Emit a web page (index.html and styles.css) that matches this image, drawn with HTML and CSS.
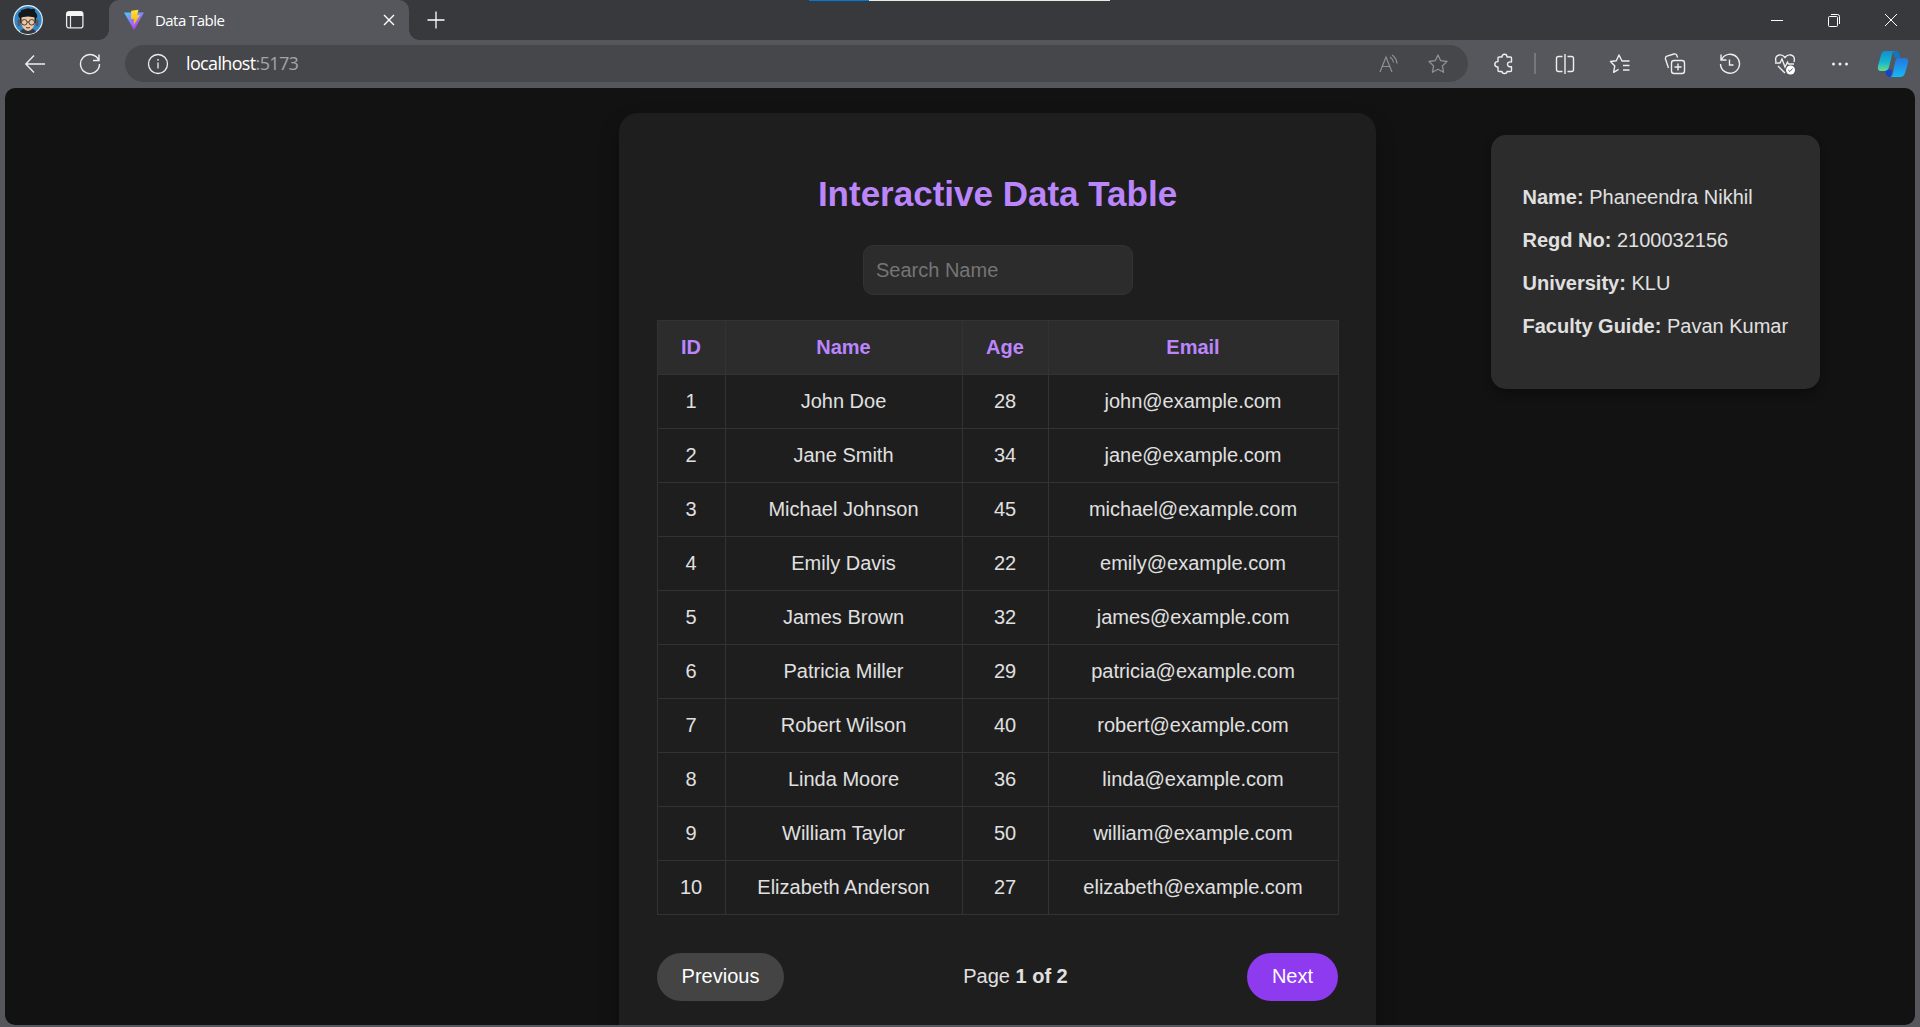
FILE: index.html
```html
<!DOCTYPE html>
<html lang="en">
<head>
<meta charset="utf-8">
<title>Data Table</title>
<link rel="stylesheet" href="styles.css">
</head>
<body>
<header class="tabstrip">
  <svg class="avatar" width="30" height="30" viewBox="0 0 30 30"><circle cx="15" cy="15" r="14.300" fill="#2f86c8" stroke="#e8eef2" stroke-width="1.200"/><path d="M7 27Q9 23 15 23Q21 23 23 27Q15 31 7 27Z" fill="#343941"/><path d="M7 10Q7 3 15 4Q23 3 23 10V18H7Z" fill="#15181b"/><path d="M8.500 11Q15 9 21.500 11V19Q20 25 15 26Q10 25 8.500 19Z" fill="#ebc6a4"/><path d="M6 13Q4 7 8 7Q7 4 11 5Q14 2 18 4Q23 3 22 7Q25 9 24 13Q15 10 6 13Z" fill="#15181b"/><rect x="4.500" y="14" width="3" height="7" rx="1.500" fill="#545963"/><rect x="22.500" y="14" width="3" height="7" rx="1.500" fill="#545963"/><g fill="none" stroke="#4a3d33"><circle cx="11.300" cy="17.300" r="2.800"/><circle cx="18.700" cy="17.300" r="2.800"/><path d="M14 17h2M13 22.500q2 1 4 0"/></g></svg>
  <svg class="workspaces" width="20" height="20" viewBox="0 0 20 20"><rect x="1.600" y="1.600" width="16.300" height="16.300" rx="2.500" fill="none" stroke="#e8e8e8" stroke-width="1.300"/><path d="M1.500 6V4q0-2.500 2.500-2.500h11.500Q18 1.500 18 4v2Z" fill="#f5f5f5"/><path d="M5.500 6v12" stroke="#e8e8e8" stroke-width="1.200"/></svg>
  <div class="tab">
    <svg width="22" height="22" viewBox="0 0 22 22"><defs><linearGradient id="vite" x1="0" y1="0" x2=".6" y2="1"><stop stop-color="#41d1ff"/><stop offset=".45" stop-color="#8585ff"/><stop offset="1" stop-color="#bd34fe"/></linearGradient><linearGradient id="bolt" x1="0" y1="0" x2="0" y2="1"><stop stop-color="#ffe33d"/><stop offset="1" stop-color="#ffa800"/></linearGradient></defs><path d="M1 3.500 21 3.500 11 21Z" fill="url(#vite)"/><path d="M8.200 1.800 15.500.8 14 6.200 17 6 10.500 16.500 11 10H8Z" fill="url(#bolt)"/></svg>
    <span class="tab-title">Data Table</span>
    <svg class="tab-close" width="12" height="12" viewBox="0 0 12 12"><path d="m1 1 10 10M11 1 1 11" stroke="#fff" stroke-width="1.400"/></svg>
  </div>
  <svg class="new-tab" width="18" height="18" viewBox="0 0 18 18"><path d="M9 .5v17M.5 9h17" stroke="#fff" stroke-width="1.300"/></svg>
  <div class="window-controls">
    <svg width="14" height="14" viewBox="0 0 14 14"><path d="M1 7.500h12" stroke="#fff"/></svg>
    <svg width="14" height="14" viewBox="0 0 14 14"><g fill="none" stroke="#fff"><rect x="1.500" y="3.500" width="9" height="10" rx="1"/><path d="M4 1.500h6.500q2 0 2 2V11"/></g></svg>
    <svg width="14" height="14" viewBox="0 0 14 14"><path d="m1 1 12 12M13 1 1 13" stroke="#fff"/></svg>
  </div>
  <div class="share-strip"><span></span></div>
</header>
<nav class="toolbar">
  <svg class="back" width="22" height="20" viewBox="0 0 22 20"><path d="M10 1.500 1.800 10l8.200 8.500M2 10h19" fill="none" stroke="#eee" stroke-width="1.400"/></svg>
  <svg class="reload" width="22" height="22" viewBox="0 0 22 22"><path d="M19.800 7.500A9.500 9.500 0 1 0 20.500 11M20 1.500v6h-6" fill="none" stroke="#eee" stroke-width="1.400"/></svg>
  <div class="address">
    <svg width="22" height="22" viewBox="0 0 22 22"><g fill="none" stroke="#eee" stroke-width="1.300"><circle cx="11" cy="11" r="9.500"/><path d="M11 9.500v6"/></g><circle cx="11" cy="6.800" r=".9" fill="#eee"/></svg>
    <span class="url"><b>localhost</b>:5173</span>
    <svg class="read-aloud" width="20" height="20" viewBox="0 0 20 20"><path d="M1 18 7 3l6 15M3.200 12.500h7.600M11 3q3 2 3.500 5.500M13 1q4.500 3 5 8.500" fill="none" stroke="#919194" stroke-width="1.200"/></svg>
    <svg class="star" width="22" height="22" viewBox="0 0 22 22"><path d="m11 2 2.700 5.700 6.300.8-4.600 4.400 1.200 6.400-5.600-3.100-5.600 3.100 1.200-6.400L2 8.500l6.300-.8Z" fill="none" stroke="#919194" stroke-width="1.300" stroke-linejoin="round"/></svg>
  </div>
  <div class="actions">
    <svg width="22" height="22" viewBox="0 0 22 22"><path d="M6 4h3q0-2.700 2.500-2.700T14 4h3.500q1 0 1 1v4q-4-.5-4 2.300t4 2.400V17.500q0 1-1 1H14q0 2-2.500 2T9 18.500H6q-1 0-1-1V14q-3.200 0-3.200-2.700T5 8.600V5q0-1 1-1Z" fill="none" stroke="#eee" stroke-width="1.400" stroke-linejoin="round"/></svg>
    <i class="divider"></i>
    <svg width="22" height="22" viewBox="0 0 22 22"><path d="M8.500 3.500h-4q-2 0-2 2v11q0 2 2 2h4M13.500 3.500h4q2 0 2 2v11q0 2-2 2h-4M11 1v20" fill="none" stroke="#eee" stroke-width="1.400"/></svg>
    <svg width="22" height="22" viewBox="0 0 22 22"><path d="M19.500 8H13l-3-6-2.700 5.700L1.500 8.500l4.300 4.400-1.200 6.400 5-3M14 8h6.500M14 12.500h6.500M14 17h6.500" fill="none" stroke="#eee" stroke-width="1.400" stroke-linejoin="round"/></svg>
    <svg width="22" height="22" viewBox="0 0 22 22"><g fill="none" stroke="#eee" stroke-width="1.400"><rect x="7.500" y="7.500" width="13" height="13" rx="2.500"/><path d="M14 10.500v7M10.500 14h7M4.500 15 1.500 6q-.5-2 1.500-2.800L10 1q2-.5 2.600 1l1 2.500"/></g></svg>
    <svg width="22" height="22" viewBox="0 0 22 22"><path d="M2 1.500v5.500h5.500M2.500 6.500A9.500 9.500 0 1 1 1.500 11M10.500 6.500V12h4" fill="none" stroke="#eee" stroke-width="1.400"/></svg>
    <svg width="22" height="22" viewBox="0 0 22 22"><path d="M2 9Q.5 3 5 2q3.500-.8 6 2.500Q13.500 1.200 17 2q4.500 1 3 7M1 10h5l2-4 3 8 2.500-5 1 2H20M4 13l7 7" fill="none" stroke="#eee" stroke-width="1.400"/><circle cx="16.500" cy="17" r="4.500" fill="#fff"/><path d="m14.300 17 1.600 1.500 2.700-3" stroke="#55565b" fill="none"/></svg>
    <svg width="22" height="22" viewBox="0 0 22 22"><g fill="#eee"><circle cx="4.500" cy="11" r="1.500"/><circle cx="11" cy="11" r="1.500"/><circle cx="17.500" cy="11" r="1.500"/></g></svg>
  </div>
  <svg class="copilot" width="32" height="30" viewBox="0 0 32 30"><defs><linearGradient id="cl" x1="0" y1="0" x2="0" y2="1"><stop stop-color="#158ccd"/><stop offset=".55" stop-color="#13b6cf"/><stop offset="1" stop-color="#62dc91"/></linearGradient><linearGradient id="cr" x1="0" y1="0" x2="0" y2="1"><stop stop-color="#2874dc"/><stop offset="1" stop-color="#14b9f8"/></linearGradient></defs><path d="M16 2h3q3 0 3.500 4l1 3h-6Z" fill="#1676bd"/><path d="m8 21 7-.5-1 7.500h-2q-3 0-4-7Z" fill="#1742cf"/><path d="M8 2h10q-2 0-3 4l-3 12q-1 4-5 4H4q-4 0-3-5L4 6q1-4 4-4Z" fill="url(#cl)"/><path d="M21 9h7q4 0 3 5l-3 10q-1 4-5 4H13q2 0 3-4l2-11q1-4 3-4Z" fill="url(#cr)"/></svg>
</nav>
<main class="viewport">
  <section class="panel">
    <h1>Interactive Data Table</h1>
    <input class="search" type="text" placeholder="Search Name">
    <table>
      <colgroup><col class="c-id"><col class="c-name"><col class="c-age"><col class="c-email"></colgroup>
      <thead><tr><th>ID</th><th>Name</th><th>Age</th><th>Email</th></tr></thead>
      <tbody>
        <tr><td>1</td><td>John Doe</td><td>28</td><td>john@example.com</td></tr>
        <tr><td>2</td><td>Jane Smith</td><td>34</td><td>jane@example.com</td></tr>
        <tr><td>3</td><td>Michael Johnson</td><td>45</td><td>michael@example.com</td></tr>
        <tr><td>4</td><td>Emily Davis</td><td>22</td><td>emily@example.com</td></tr>
        <tr><td>5</td><td>James Brown</td><td>32</td><td>james@example.com</td></tr>
        <tr><td>6</td><td>Patricia Miller</td><td>29</td><td>patricia@example.com</td></tr>
        <tr><td>7</td><td>Robert Wilson</td><td>40</td><td>robert@example.com</td></tr>
        <tr><td>8</td><td>Linda Moore</td><td>36</td><td>linda@example.com</td></tr>
        <tr><td>9</td><td>William Taylor</td><td>50</td><td>william@example.com</td></tr>
        <tr><td>10</td><td>Elizabeth Anderson</td><td>27</td><td>elizabeth@example.com</td></tr>
      </tbody>
    </table>
    <div class="pagination">
      <button class="prev">Previous</button>
      <span>Page <strong>1 of 2</strong></span>
      <button class="next">Next</button>
    </div>
  </section>
  <aside class="details">
    <p><strong>Name:</strong> Phaneendra Nikhil</p>
    <p><strong>Regd No:</strong> 2100032156</p>
    <p><strong>University:</strong> KLU</p>
    <p><strong>Faculty Guide:</strong> Pavan Kumar</p>
  </aside>
</main>
</body>
</html>
```
FILE: styles.css
```css
* { box-sizing: border-box; }
body {
  margin: 0;
  height: 1027px;
  overflow: hidden;
  display: flex;
  flex-direction: column;
  background: #56575c;
  color: #e0e0e0;
  font: 20px "Liberation Sans", Arial, sans-serif;
}
svg { display: block; flex: none; }

.tabstrip {
  position: relative;
  flex: none;
  height: 40px;
  display: flex;
  align-items: center;
  background: #38393c;
}
.avatar { margin-left: 13px; }
.workspaces { margin-left: 22px; }
.tab {
  position: relative;
  width: 300px;
  height: 40px;
  margin-left: 24px;
  padding: 0 14px;
  display: flex;
  align-items: center;
  border-radius: 10px 10px 0 0;
  background: #56575c;
}
.tab::before, .tab::after {
  content: "";
  position: absolute;
  bottom: 0;
  width: 10px;
  height: 10px;
}
.tab::before { left: -10px; background: radial-gradient(circle at 0 0, #38393c 9.5px, #56575c 10px); }
.tab::after { right: -10px; background: radial-gradient(circle at 100% 0, #38393c 9.5px, #56575c 10px); }
.tab-title {
  margin-left: 10px;
  padding-bottom: 1px;
  font: 15px "Open Sans", sans-serif;
  letter-spacing: -.55px;
  color: #fff;
}
.tab-close { margin-left: auto; }
.new-tab { margin-left: 18px; }
.window-controls { margin-left: auto; margin-right: 22px; display: flex; gap: 43px; }
.share-strip {
  position: absolute;
  top: 0;
  left: 809px;
  width: 301px;
  height: 1px;
  background: #e4ece4;
}
.share-strip span { display: block; width: 60px; height: 1px; background: #0078d7; }

.toolbar {
  flex: none;
  height: 48px;
  padding-bottom: 1px;
  display: flex;
  align-items: center;
}
.back { margin-left: 24px; }
.reload { margin-left: 33px; }
.address {
  width: 1343px;
  height: 37px;
  margin-left: 24px;
  padding: 0 19px 0 22px;
  display: flex;
  align-items: center;
  border-radius: 19px;
  background: #46474a;
}
.url { margin-left: 17px; padding-bottom: 1px; font: 18px "Open Sans", sans-serif; letter-spacing: -.65px; color: #a5a5a8; }
.url b { font-weight: 400; color: #fff; }
.read-aloud { margin-left: auto; }
.star { margin-left: 28px; }
.actions { flex: none; display: flex; align-items: center; margin-left: 25px; gap: 33px; }
.divider { width: 2px; height: 21px; margin: 0 -15px 0 -14px; background: #77787c; }
.copilot { margin-left: 26px; }

.viewport {
  flex: none;
  width: 1910px;
  height: 937px;
  margin-left: 5px;
  display: flex;
  align-items: flex-start;
  overflow: hidden;
  border-radius: 10px;
  background: #121212;
}
.panel {
  flex: none;
  width: 757px;
  height: 960px;
  margin: 25px 0 0 614px;
  padding: 59px 38px 0;
  display: flex;
  flex-direction: column;
  align-items: center;
  border-radius: 19px;
  background: #1e1e1e;
  box-shadow: 0 10px 20px rgba(0, 0, 0, .3);
}
h1 {
  margin: 0;
  font-size: 35px;
  line-height: 44px;
  color: #bb86fc;
}
.search {
  width: 270px;
  height: 50px;
  margin: 29px 0 25px;
  padding: 0 12.5px;
  border: 1px solid #333;
  border-radius: 10px;
  background: #2c2c2c;
  font: inherit;
}
.search::placeholder { color: #757575; }
table {
  width: 681px;
  table-layout: fixed;
  border-collapse: collapse;
  text-align: center;
}
.c-id { width: 68px; }
.c-name { width: 237px; }
.c-age { width: 86px; }
.c-email { width: 290px; }
th, td { height: 54px; padding: 0; border: 1px solid #333; }
th { background: #2c2c2c; color: #bb86fc; }
.pagination {
  width: 681px;
  margin-top: 38px;
  display: flex;
  align-items: center;
  justify-content: space-between;
}
.pagination span { padding-bottom: 2px; }
button {
  height: 48px;
  padding: 0 0 2px;
  border: 0;
  border-radius: 24px;
  font: inherit;
  color: #fff;
}
.prev { width: 127px; background: #444; }
.next { width: 91px; background: #8e3bf0; }

.details {
  flex: none;
  width: 329px;
  height: 254px;
  margin: 47px 0 0 115px;
  padding: 41px 0 0 31.5px;
  border-radius: 15px;
  background: #2c2c2c;
  box-shadow: 0 5px 10px rgba(0, 0, 0, .3);
  white-space: nowrap;
}
.details p { margin: 0; line-height: 43px; }
```
